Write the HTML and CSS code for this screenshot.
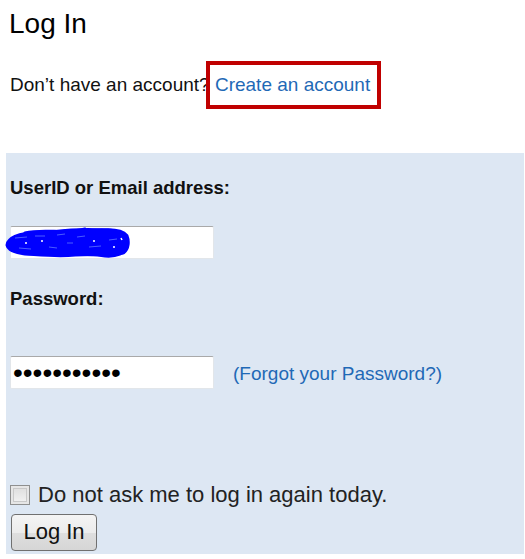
FILE: index.html
```html
<!DOCTYPE html>
<html lang="en">
<head>
<meta charset="utf-8">
<title>Log In</title>
<link rel="stylesheet" href="styles.css">
</head>
<body>
<h1 class="title">Log In</h1>
<p class="signup">Don’t have an account? <span class="create-wrap"><a class="create" href="#">Create an account</a><span class="highlight"></span></span></p>
<form class="panel">
  <label class="field-label" for="uid">UserID or Email address:</label>
  <div class="input-wrap">
    <input class="text-input" id="uid" type="text">
    <svg class="scribble" viewBox="0 0 126 31" width="126" height="31" aria-hidden="true">
      <path d="M5 14 C10 7 28 6 48 6 C64 4 80 3 96 4 C108 3 117 4 121 9 C123 14 123 21 118 25 C104 27 86 26 70 27 C54 29 36 27 20 26 C11 25 4 22 3 18 C3 16 4 15 5 14 Z" fill="#0000ff" stroke="#0000ff" stroke-width="5" stroke-linejoin="round"/>
      <path d="M8 12 C30 3 60 6 90 3 C110 2 122 6 120 10 M6 22 C30 30 70 24 100 29 C112 30 120 26 122 20 M20 6 C40 1 60 8 80 2" stroke="#0000ff" stroke-width="3" fill="none" stroke-linecap="round"/>
      <path d="M10 11 L22 10 M30 9 L40 9 M52 8 L60 7 M72 10 L80 9 M14 21 L26 22 M44 20 L52 21 M84 20 L96 19 M104 13 L112 12 M62 16 L68 16" stroke="#4a5cff" stroke-width="1" fill="none"/>
      <path d="M36 14 L38 14 M88 14 L90 14 M108 20 L110 20 M20 16 L22 16 M116 11 L117 13" stroke="#ffffff" stroke-width="1.5" fill="none"/>
    </svg>
  </div>
  <label class="field-label pw-label" for="pw">Password:</label>
  <div class="pw-row">
    <input class="text-input pw-input" id="pw" type="password" value="abcdefghijk">
    <a class="forgot" href="#">(Forgot your Password?)</a>
  </div>
  <label class="remember"><input class="check" type="checkbox"><span>Do not ask me to log in again today.</span></label>
  <button class="login-btn" type="button">Log In</button>
</form>
</body>
</html>
```
FILE: styles.css
```css
html, body {
  margin: 0;
  padding: 0;
  background: #ffffff;
}
body {
  font-family: "Liberation Sans", Arial, sans-serif;
  color: #000;
  width: 525px;
}
.title {
  font-size: 28px;
  font-weight: normal;
  line-height: 30px;
  margin: 9px 0 0 9px;
}
.signup {
  font-size: 19px;
  line-height: 22px;
  margin: 35px 0 0 10px;
  color: #111;
}
.create-wrap {
  position: relative;
}
.create {
  color: #1f69b6;
  text-decoration: none;
}
.highlight {
  position: absolute;
  left: -9px;
  top: -13px;
  width: 175px;
  height: 48px;
  box-sizing: border-box;
  border: 4px solid #c00000;
}
.panel {
  margin: 57px 1px 0 6px;
  background: #dde7f3;
  padding: 24px 4px 3px 4px;
  display: flex;
  flex-direction: column;
  align-items: flex-start;
}
.field-label {
  font-size: 18.5px;
  font-weight: bold;
  line-height: 22px;
  color: #111;
}
.input-wrap {
  position: relative;
  margin-top: 27px;
}
.text-input {
  display: block;
  box-sizing: border-box;
  width: 204px;
  height: 33px;
  margin: 0;
  padding: 0 3px;
  background: #fff;
  border: 1px solid #e2e6ea;
  border-top-color: #a9a9a9;
  border-radius: 2px;
  font-family: "Liberation Sans", Arial, sans-serif;
  font-size: 19px;
  outline: none;
}
.scribble {
  position: absolute;
  left: -5px;
  top: 1px;
}
.pw-label {
  margin-top: 29px;
}
.pw-row {
  margin-top: 46px;
  display: flex;
  align-items: center;
  gap: 19px;
}
.pw-input {
  font-size: 28px;
  letter-spacing: 0;
  color: #000;
  padding-left: 2px;
}
.forgot {
  font-size: 19px;
  color: #1f69b6;
  text-decoration: none;
  padding-top: 2px;
}
.remember {
  margin-top: 94px;
  display: flex;
  align-items: center;
  gap: 8px;
  font-size: 22px;
  line-height: 24px;
  color: #222;
}
.check {
  appearance: none;
  -webkit-appearance: none;
  width: 20px;
  height: 20px;
  margin: 0;
  box-sizing: border-box;
  border: 1px solid #8e8f8f;
  background: linear-gradient(#dcdcdc, #f4f4f4);
  box-shadow: inset 0 0 0 2px #e6e6e6, inset 0 0 0 3px #c9c9c9;
}
.login-btn {
  margin: 7px 0 0 1px;
  width: 86px;
  height: 37px;
  box-sizing: border-box;
  padding: 0 0 2px 0;
  font-family: "Liberation Sans", Arial, sans-serif;
  font-size: 22px;
  color: #111;
  border: 1px solid #707070;
  border-radius: 4px;
  background: linear-gradient(#f4f4f4 0%, #ececec 50%, #dedede 51%, #d6d6d6 100%);
}
```
